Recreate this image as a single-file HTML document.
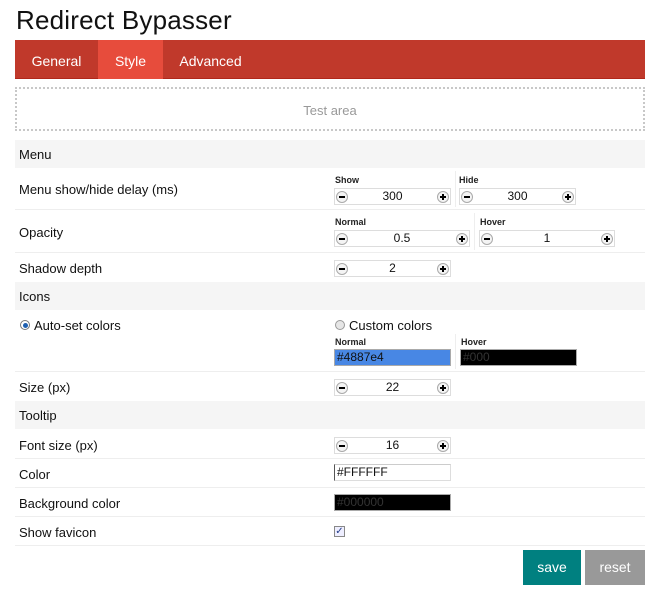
<!DOCTYPE html>
<html><head><meta charset="utf-8"><style>
*{margin:0;padding:0;box-sizing:border-box}
body{width:660px;height:594px;background:#fff;font-family:"Liberation Sans",sans-serif;color:#111;position:relative;overflow:hidden;font-size:13px}
.a{position:absolute}
h1{position:absolute;left:16px;top:5px;font-size:26px;font-weight:normal;color:#111;letter-spacing:0.2px}
.tabs{left:15px;top:40px;width:630px;height:39px;background:#c0392b;border-bottom:1px solid #b0281b}
.tab{position:absolute;top:0;height:39px;line-height:42px;color:#fff;font-size:14px;text-align:center}
.test{left:15px;top:87px;width:630px;height:44px;border:2px dotted #c8c8c8;text-align:center;line-height:44px;color:#999;font-size:13px}
.hd{left:15px;width:630px;background:#f5f5f5;height:28px;line-height:30px;padding-left:4px;font-size:13px}
.row{left:15px;width:630px;border-bottom:1px solid #eee}
.lb{left:19px;font-size:13px}
.sm{font-size:9px;font-weight:bold;color:#222}
.sp{height:17px;border:1px solid #ddd;background:#fff;font-size:12px;text-align:center;line-height:15px}
.sp .m,.sp .p{position:absolute;top:2px;width:12px;height:12px;border:1px solid #aaa;border-radius:50%;background:#f4f4f4}
.sp .m{left:1px}.sp .p{right:1px}
.sp .m:after,.sp .p:after{content:"";position:absolute;left:2px;top:4px;width:6px;height:2px;background:#000}
.sp .p:before{content:"";position:absolute;left:4px;top:2px;width:2px;height:6px;background:#000}
.in{height:17px;border:1px solid #aaa;font-size:12px;line-height:15px;padding-left:2px}
.vs{width:1px;background:#eee}
</style></head><body>
<h1>Redirect Bypasser</h1>
<div class="a tabs">
<div class="tab" style="left:0;width:83px">General</div>
<div class="tab" style="left:83px;width:65px;background:#e74c3c">Style</div>
<div class="tab" style="left:148px;width:95px">Advanced</div>
</div>
<div class="a test">Test area</div>

<div class="a hd" style="top:140px">Menu</div>
<div class="a row" style="top:168px;height:42px"></div>
<div class="a lb" style="top:182px">Menu show/hide delay (ms)</div>
<div class="a sm" style="left:335px;top:175px">Show</div>
<div class="a sp" style="left:334px;top:188px;width:117px"><span class="m"></span>300<span class="p"></span></div>
<div class="a vs" style="left:455px;top:171px;height:36px"></div>
<div class="a sm" style="left:459px;top:175px">Hide</div>
<div class="a sp" style="left:459px;top:188px;width:117px"><span class="m"></span>300<span class="p"></span></div>

<div class="a row" style="top:210px;height:43px"></div>
<div class="a lb" style="top:225px">Opacity</div>
<div class="a sm" style="left:335px;top:217px">Normal</div>
<div class="a sp" style="left:334px;top:230px;width:136px"><span class="m"></span>0.5<span class="p"></span></div>
<div class="a vs" style="left:474px;top:213px;height:37px"></div>
<div class="a sm" style="left:480px;top:217px">Hover</div>
<div class="a sp" style="left:479px;top:230px;width:136px"><span class="m"></span>1<span class="p"></span></div>

<div class="a row" style="top:253px;height:29px;border:none"></div>
<div class="a lb" style="top:261px">Shadow depth</div>
<div class="a sp" style="left:334px;top:260px;width:117px"><span class="m"></span>2<span class="p"></span></div>

<div class="a hd" style="top:282px">Icons</div>
<div class="a row" style="top:310px;height:62px"></div>
<div class="a" style="left:20px;top:320px;width:10px;height:10px;border-radius:50%;border:1px solid #777;background:#fff"><div style="position:absolute;left:1.5px;top:1.5px;width:5px;height:5px;border-radius:50%;background:#1e5fb0"></div></div>
<div class="a" style="left:34px;top:318px">Auto-set colors</div>
<div class="a" style="left:335px;top:320px;width:10px;height:10px;border-radius:50%;border:1px solid #999;background:#e6e6e6"></div>
<div class="a" style="left:349px;top:318px">Custom colors</div>
<div class="a sm" style="left:335px;top:337px">Normal</div>
<div class="a in" style="left:334px;top:349px;width:117px;background:#4887e4;color:#111">#4887e4</div>
<div class="a vs" style="left:455px;top:334px;height:35px"></div>
<div class="a sm" style="left:461px;top:337px">Hover</div>
<div class="a in" style="left:460px;top:349px;width:117px;background:#000;color:#333">#000</div>

<div class="a row" style="top:372px;height:29px;border:none"></div>
<div class="a lb" style="top:380px">Size (px)</div>
<div class="a sp" style="left:334px;top:379px;width:117px"><span class="m"></span>22<span class="p"></span></div>

<div class="a hd" style="top:401px">Tooltip</div>
<div class="a row" style="top:430px;height:29px"></div>
<div class="a lb" style="top:438px">Font size (px)</div>
<div class="a sp" style="left:334px;top:437px;width:117px"><span class="m"></span>16<span class="p"></span></div>
<div class="a row" style="top:459px;height:29px"></div>
<div class="a lb" style="top:467px">Color</div>
<div class="a in" style="left:334px;top:464px;width:117px;background:#fff;border-color:#ccc #ddd #ddd #555;color:#111">#FFFFFF</div>
<div class="a row" style="top:488px;height:29px"></div>
<div class="a lb" style="top:496px">Background color</div>
<div class="a in" style="left:334px;top:494px;width:117px;background:#000;color:#333">#000000</div>
<div class="a row" style="top:517px;height:29px"></div>
<div class="a lb" style="top:525px">Show favicon</div>
<div class="a" style="left:334px;top:526px;width:11px;height:11px;border:1px solid #888;background:#eef;font-size:10px;line-height:9px;text-align:center;color:#223c88">✓</div>

<div class="a" style="left:523px;top:550px;width:58px;height:35px;background:#008080;color:#fff;font-size:14px;text-align:center;line-height:35px">save</div>
<div class="a" style="left:585px;top:550px;width:60px;height:35px;background:#999;color:#fff;font-size:14px;text-align:center;line-height:35px">reset</div>
</body></html>
